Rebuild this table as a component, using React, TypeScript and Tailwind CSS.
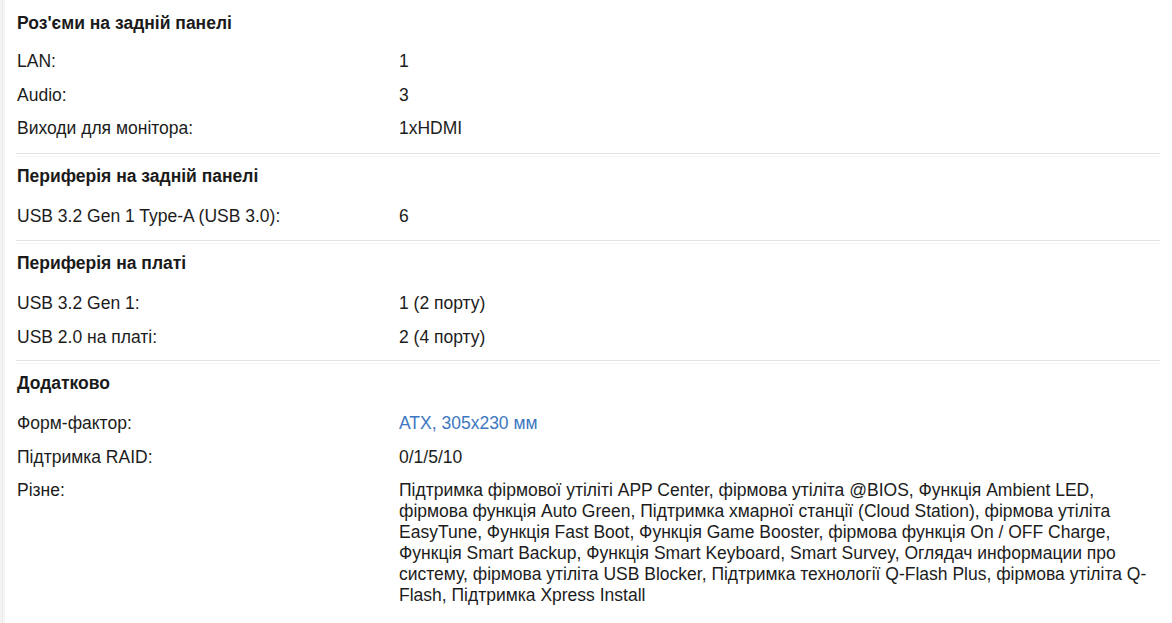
import React from "react";

type Row = { label: string; value: string; link?: boolean };
type Section = { title: string; rows: Row[] };

const sections: Section[] = [
  {
    title: "Роз'єми на задній панелі",
    rows: [
      { label: "LAN:", value: "1" },
      { label: "Audio:", value: "3" },
      { label: "Виходи для монітора:", value: "1xHDMI" },
    ],
  },
  {
    title: "Периферія на задній панелі",
    rows: [{ label: "USB 3.2 Gen 1 Type-A (USB 3.0):", value: "6" }],
  },
  {
    title: "Периферія на платі",
    rows: [
      { label: "USB 3.2 Gen 1:", value: "1 (2 порту)" },
      { label: "USB 2.0 на платі:", value: "2 (4 порту)" },
    ],
  },
  {
    title: "Додатково",
    rows: [
      { label: "Форм-фактор:", value: "ATX, 305x230 мм", link: true },
      { label: "Підтримка RAID:", value: "0/1/5/10" },
      {
        label: "Різне:",
        value:
          "Підтримка фірмової утіліті APP Center, фірмова утіліта @BIOS, Функція Ambient LED, фірмова функція Auto Green, Підтримка хмарної станції (Cloud Station), фірмова утіліта EasyTune, Функція Fast Boot, Функція Game Booster, фірмова функція On / OFF Charge, Функція Smart Backup, Функція Smart Keyboard, Smart Survey, Оглядач информации про систему, фірмова утіліта USB Blocker, Підтримка технології Q-Flash Plus, фірмова утіліта Q-Flash, Підтримка Xpress Install",
      },
    ],
  },
];

const sectionPad = ["pt-[12px] pb-[8px]", "pt-[9px] pb-[8px]", "pt-[9px] pb-[7px]", "pt-[9px] pb-[8px]"];
const headingPad = ["pt-[1px] mb-[12px]", "pt-0 mb-[13px]", "pt-0 mb-[13px]", "pt-0 mb-[13px]"];

export default function App() {
  return (
    <div
      className="flex min-h-[623px] w-[1172px] bg-white text-[17.5px] text-[#1c1c1c]"
      style={{ fontFamily: '"Liberation Sans", Arial, sans-serif' }}
    >
      <div className="flex w-[5px] shrink-0">
        <div className="w-[2px] bg-[#f4f4f4]" />
        <div className="w-[1px] bg-[#e9e9e9]" />
        <div className="w-[2px] bg-[#f6f6f6]" />
      </div>
      <div className="flex flex-1 flex-col pl-[11px] pr-[12px]">
        {sections.map((s, i) => (
          <div key={i} className="flex flex-col">
            {i > 0 && (
              <div className="flex flex-col">
                <div className="h-[1px] bg-[#e3e3e3]" />
                <div className="h-[2px]" />
                <div className="h-[1px] bg-[#f5f5f5]" />
              </div>
            )}
            <div className={"flex flex-col " + sectionPad[i]}>
              <div
                className={
                  "h-[20px] pl-[1px] text-[17.5px] font-bold leading-[20px] text-[#1a1a1a] " + headingPad[i]
                }
              >
                {s.title}
              </div>
              {s.rows.map((r, j) => (
                <div key={j} className="flex min-h-[33.5px] items-start">
                  <div className="w-[383px] shrink-0 pl-[1px] pt-[7px] leading-[20px]">{r.label}</div>
                  {r.value.length > 60 ? (
                    <div className="w-[755px] pt-[7px] leading-[21px]">{r.value}</div>
                  ) : (
                    <div
                      className={
                        "pt-[7px] leading-[20px] " + (r.link ? "text-[#3d77c2]" : "")
                      }
                    >
                      {r.value}
                    </div>
                  )}
                </div>
              ))}
            </div>
          </div>
        ))}
      </div>
    </div>
  );
}
